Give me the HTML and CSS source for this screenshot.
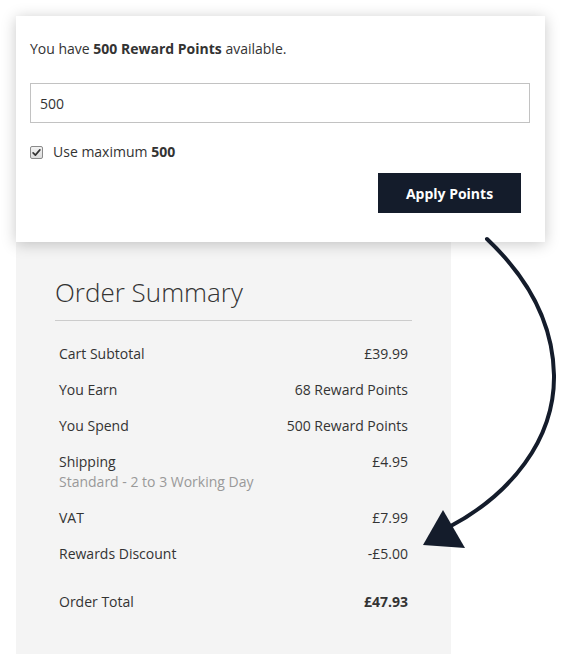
FILE: index.html
```html
<!DOCTYPE html>
<html lang="en">
<head>
<meta charset="utf-8">
<title>Reward Points</title>
<link rel="stylesheet" href="styles.css">
</head>
<body>
<div class="page">
  <section class="card">
    <p class="intro">You have <strong>500 Reward Points</strong> available.</p>
    <input class="field" type="text" value="500">
    <label class="check-row">
      <span class="checkbox">
        <svg viewBox="0 0 12 12" width="9" height="9"><path d="M1.5 6.5 L4.5 9.5 L10.5 2.5" fill="none" stroke="#333" stroke-width="2.2" stroke-linecap="round" stroke-linejoin="round"/></svg>
      </span>
      <span>Use maximum <strong>500</strong></span>
    </label>
    <div class="actions">
      <button class="btn" type="button">Apply Points</button>
    </div>
  </section>

  <section class="summary">
    <h2 class="summary-title">Order Summary</h2>
    <div class="rows">
      <div class="row"><span>Cart Subtotal</span><span>£39.99</span></div>
      <div class="row"><span>You Earn</span><span>68 Reward Points</span></div>
      <div class="row"><span>You Spend</span><span>500 Reward Points</span></div>
      <div class="row">
        <span class="stack">Shipping<span class="sub">Standard - 2 to 3 Working Day</span></span>
        <span>£4.95</span>
      </div>
      <div class="row"><span>VAT</span><span>£7.99</span></div>
      <div class="row"><span>Rewards Discount</span><span>-£5.00</span></div>
      <div class="row total"><span>Order Total</span><strong>£47.93</strong></div>
    </div>
  </section>

  <svg class="arrow" width="561" height="654" viewBox="0 0 561 654">
    <path d="M487 239 C525 275 553 320 554 375 C555 440 510 495 449 527" fill="none" stroke="#141c2b" stroke-width="4" stroke-linecap="round"/>
    <polygon points="443,510 423,545 465,548" fill="#141c2b"/>
  </svg>
</div>
</body>
</html>
```

FILE: styles.css
```css
html, body {
  margin: 0;
  padding: 0;
  background: #ffffff;
  overflow: hidden;
}

body {
  font-family: "Open Sans", "Noto Sans", sans-serif;
  font-size: 14px;
  color: #333333;
}

.page {
  position: relative;
  width: 561px;
  height: 654px;
  box-sizing: border-box;
  padding-top: 16px;
}

.card {
  position: relative;
  z-index: 2;
  margin: 0 16px;
  width: 529px;
  box-sizing: border-box;
  padding: 23px 15px 29px 14px;
  background: #ffffff;
  box-shadow: 0 2px 14px rgba(0, 0, 0, 0.22);
}

.intro {
  margin: 0 0 24px;
  line-height: 20px;
}

.intro strong,
.check-row strong {
  font-weight: 700;
}

.field {
  display: block;
  width: 100%;
  height: 40px;
  box-sizing: border-box;
  margin: 0;
  padding: 0 9px;
  border: 1px solid #c2c2c2;
  border-radius: 0;
  font-family: inherit;
  font-size: 14px;
  color: #333333;
  background: #ffffff;
  outline: none;
}

.check-row {
  display: flex;
  align-items: center;
  gap: 10px;
  margin-top: 19px;
  line-height: 20px;
}

.checkbox {
  display: flex;
  align-items: center;
  justify-content: center;
  width: 13px;
  height: 13px;
  box-sizing: border-box;
  border: 1px solid #8a8a8a;
  border-radius: 2px;
  background: linear-gradient(#f2f2f2, #dcdcdc);
}

.actions {
  display: flex;
  justify-content: flex-end;
  margin-top: 11px;
  padding-right: 9px;
}

.btn {
  width: 143px;
  height: 40px;
  border: 0;
  padding: 0;
  background: #141c2b;
  color: #ffffff;
  font-family: inherit;
  font-size: 14px;
  font-weight: 700;
}

.summary {
  position: relative;
  z-index: 1;
  margin-left: 16px;
  width: 435px;
  height: 412px;
  box-sizing: border-box;
  padding: 32px 39px 0;
  background: #f4f4f4;
}

.summary-title {
  margin: 0;
  padding-bottom: 10px;
  border-bottom: 1px solid #cccccc;
  font-size: 26px;
  font-weight: 300;
  line-height: 36px;
  color: #333333;
}

.rows {
  margin-top: 15px;
}

.row {
  display: flex;
  justify-content: space-between;
  align-items: flex-start;
  padding: 8px 4px;
  line-height: 20px;
}

.stack {
  display: flex;
  flex-direction: column;
}

.sub {
  color: #999999;
}

.total {
  margin-top: 12px;
}

.total strong {
  font-weight: 700;
}

.arrow {
  position: absolute;
  left: 0;
  top: 0;
  z-index: 3;
  pointer-events: none;
}
```
